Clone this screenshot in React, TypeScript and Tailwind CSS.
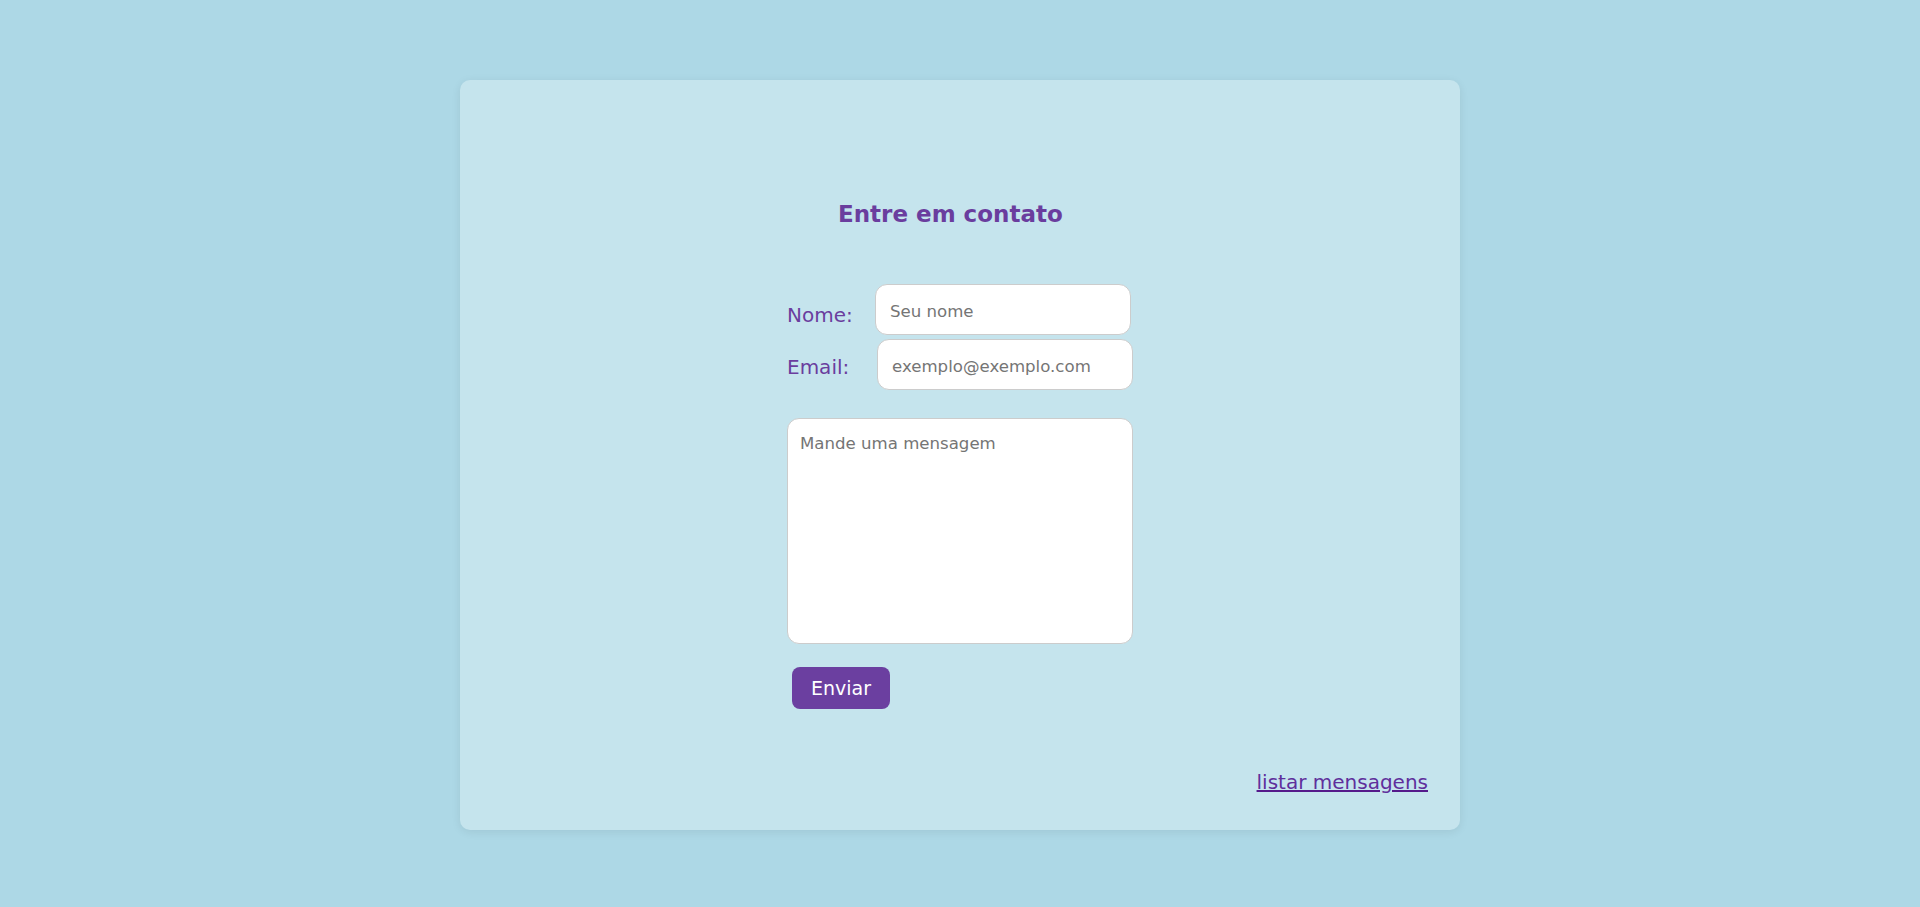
import { useState } from "react";

const App = () => {
  const [nome, setNome] = useState("");
  const [email, setEmail] = useState("");
  const [mensagem, setMensagem] = useState("");

  return (
    <div
      className="min-h-[907px] w-full bg-[#add8e6] pt-[80px]"
      style={{ fontFamily: '"DejaVu Sans", Verdana, sans-serif' }}
    >
      {/* Card */}
      <div className="mx-auto flex h-[750px] w-[1000px] flex-col rounded-[10px] bg-[#c5e4ed] pl-[327px] pr-[32px] pt-[121px] shadow-[0_2px_10px_rgba(0,0,0,0.08)]">
        {/* Title */}
        <h2 className="ml-[51px] text-[23px] font-bold leading-[27px] text-[#6a3d9e]">
          Entre em contato
        </h2>

        <form className="mt-[56px] flex flex-col" onSubmit={(e) => e.preventDefault()}>
          {/* Nome */}
          <div className="flex items-start">
            <label className="mt-[20px] w-[88px] text-[20px] leading-[23px] text-[#6a3d9e]">Nome:</label>
            <input
              value={nome}
              onChange={(e) => setNome(e.target.value)}
              placeholder="Seu nome"
              className="box-border h-[51px] w-[256px] rounded-[12px] border border-[#cccccc] bg-white pb-[13px] pl-[14px] pt-[17px] text-[16.6px] leading-[19px] outline-none placeholder:text-[#757575]"
            />
          </div>

          {/* Email */}
          <div className="mt-[4px] flex items-start">
            <label className="mt-[17px] w-[90px] text-[20px] leading-[23px] text-[#6a3d9e]">Email:</label>
            <input
              value={email}
              onChange={(e) => setEmail(e.target.value)}
              placeholder="exemplo@exemplo.com"
              className="box-border h-[51px] w-[256px] rounded-[12px] border border-[#cccccc] bg-white pb-[13px] pl-[14px] pt-[17px] text-[16.6px] leading-[19px] outline-none placeholder:text-[#757575]"
            />
          </div>

          {/* Mensagem */}
          <textarea
            value={mensagem}
            onChange={(e) => setMensagem(e.target.value)}
            placeholder="Mande uma mensagem"
            className="mt-[28px] box-border h-[226px] w-[346px] resize-none rounded-[12px] border border-[#cccccc] bg-white pl-[12px] pr-[12px] pt-[15px] text-[16.6px] leading-[19px] outline-none placeholder:text-[#757575]"
          />

          <div>
            <button
              type="submit"
              className="ml-[5px] mt-[23px] h-[42px] w-[98px] rounded-[8px] bg-[#6b3fa0] text-[19px] leading-[22px] text-white"
            >
              Enviar
            </button>
          </div>
        </form>

        {/* Link */}
        <div className="mt-[62px] flex justify-end">
          <a
            href="#"
            className="text-[20px] leading-[23px] text-[#5f2f9c] underline decoration-[#551a8b]"
          >
            listar mensagens
          </a>
        </div>
      </div>
    </div>
  );
};

export default App;
